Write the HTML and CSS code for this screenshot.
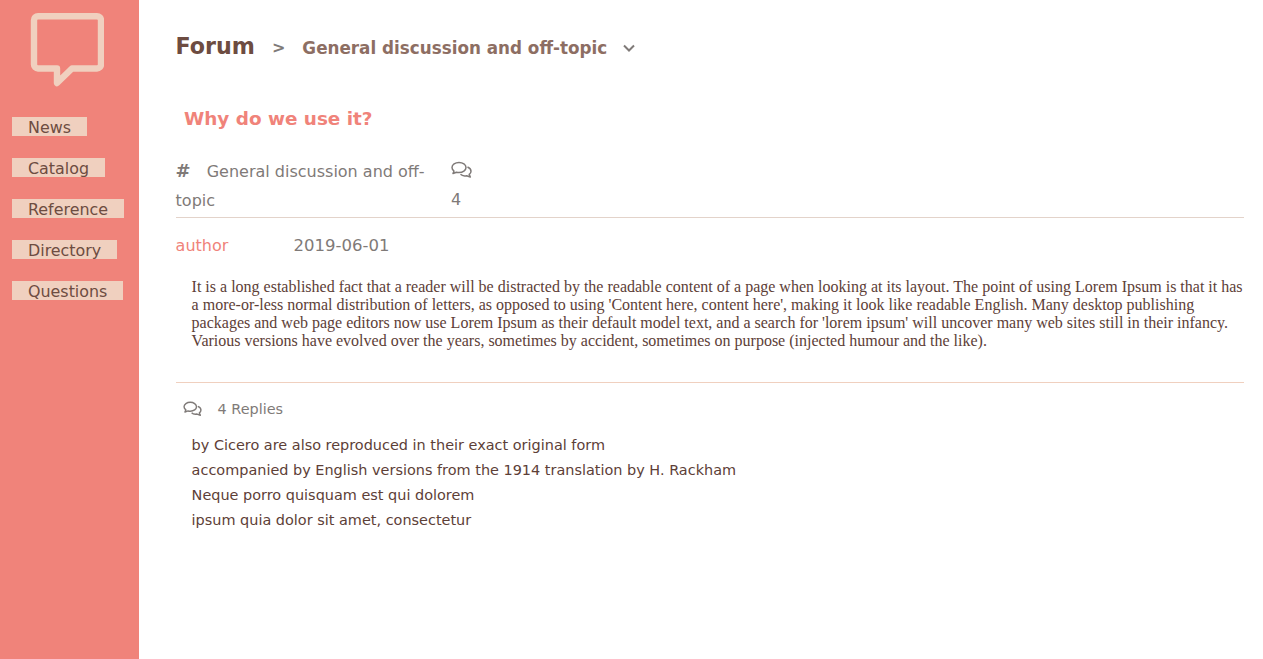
FILE: index.html
```html
<!DOCTYPE html>
<html>
	<head>
		<meta charset="UTF-8">
		<title>Forum</title>
		<link rel="stylesheet" href="styles.css">
	</head>
	<body>
		<!-- sidebar -->
		<div class="side">
			<svg class="logo" width="74" height="74" viewBox="0 0 74 74">
				<path d="M8 3.200H67A4 4 0 0 1 71 7.200V51.500A4 4 0 0 1 67 55.500H42L27 70V55.500H8A4 4 0 0 1 4 51.500V7.200A4 4 0 0 1 8 3.200Z" fill="none" stroke="#f0d0bf" stroke-width="6.400" stroke-linejoin="round"/>
			</svg>
			<ul class="nav">
				<li><a>News</a></li>
				<li><a>Catalog</a></li>
				<li><a>Reference</a></li>
				<li><a>Directory</a></li>
				<li><a>Questions</a></li>
			</ul>
		</div>
		<!-- main -->
		<div class="main">
			<div class="crumb">
				<span class="crumb-root">Forum</span>
				<span class="crumb-sep">&gt;</span>
				<span class="crumb-cat">General discussion and off-topic</span>
				<svg class="crumb-arrow" width="12" height="8" viewBox="0 0 12 8">
					<path d="M1 1.500L6 6.500L11 1.500" fill="none" stroke="#7f7a78" stroke-width="2"/>
				</svg>
			</div>
			<h2 class="title">Why do we use it?</h2>
			<div class="info">
				<div class="info-cat"><b class="hash">#</b>General discussion and off-topic</div>
				<div class="info-count">
					<svg class="talk" width="21" height="18" viewBox="0 0 21 18">
						<path d="M8 1.500C4.200 1.500 1 3.700 1 6.500C1 7.900 1.800 9.100 3 10L2 12.500L5.500 11.200C6.300 11.400 7.100 11.500 8 11.500C11.800 11.500 15 9.300 15 6.500C15 3.700 11.800 1.500 8 1.500Z" fill="none" stroke="#7f7a78" stroke-width="1.500" stroke-linejoin="round"/>
						<path d="M16.500 6C18.800 7 20 8.400 20 10.200C20 11.500 19.300 12.600 18.200 13.400L19.300 16L15.600 14.700C13.500 15.100 11 14.800 9.500 13.300" fill="none" stroke="#7f7a78" stroke-width="1.500" stroke-linejoin="round"/>
					</svg>
					<div>4</div>
				</div>
			</div>
			<div class="meta"><span class="author">author</span><span class="date">2019-06-01</span></div>
			<p class="content">It is a long established fact that a reader will be distracted by the readable content of a page when looking at its layout. The point of using Lorem Ipsum is that it has a more-or-less normal distribution of letters, as opposed to using 'Content here, content here', making it look like readable English. Many desktop publishing packages and web page editors now use Lorem Ipsum as their default model text, and a search for 'lorem ipsum' will uncover many web sites still in their infancy. Various versions have evolved over the years, sometimes by accident, sometimes on purpose (injected humour and the like).</p>
			<div class="replies-head">
				<svg class="talk-small" width="19" height="16" viewBox="0 0 21 18">
					<path d="M8 1.500C4.200 1.500 1 3.700 1 6.500C1 7.900 1.800 9.100 3 10L2 12.500L5.500 11.200C6.300 11.400 7.100 11.500 8 11.500C11.800 11.500 15 9.300 15 6.500C15 3.700 11.800 1.500 8 1.500Z" fill="none" stroke="#7f7a78" stroke-width="1.600" stroke-linejoin="round"/>
					<path d="M16.500 6C18.800 7 20 8.400 20 10.200C20 11.500 19.300 12.600 18.200 13.400L19.300 16L15.600 14.700C13.500 15.100 11 14.800 9.500 13.300" fill="none" stroke="#7f7a78" stroke-width="1.600" stroke-linejoin="round"/>
				</svg>
				<span>4 Replies</span>
			</div>
			<ul class="replies">
				<li>by Cicero are also reproduced in their exact original form</li>
				<li>accompanied by English versions from the 1914 translation by H. Rackham</li>
				<li>Neque porro quisquam est qui dolorem</li>
				<li>ipsum quia dolor sit amet, consectetur</li>
			</ul>
		</div>
	</body>
</html>
```

FILE: styles.css
```css
* {
	margin: 0;
	padding: 0;
	box-sizing: border-box;
}
html, body {
	height: 100%;
}
body {
	display: flex;
	font-family: "DejaVu Sans", sans-serif;
	background: #fff;
	overflow: hidden;
}
.side {
	width: 139px;
	flex-shrink: 0;
	background: #f0837a;
	padding: 13px 0 0 12px;
}
.logo {
	display: block;
	margin-left: 18px;
}
.nav {
	list-style: none;
	margin-top: 30px;
}
.nav li {
	height: 41px;
}
.nav a {
	display: inline-block;
	height: 19px;
	padding: 0 16px;
	background: #f0d0bf;
	color: #6d4c41;
	font-size: 15.9px;
	line-height: 21px;
	vertical-align: top;
}
.main {
	flex: 1;
	padding: 31px 19px 0 36.600px;
}
.crumb {
	display: flex;
	align-items: center;
	height: 29px;
}
.crumb-root {
	font-size: 22.200px;
	font-weight: bold;
	color: #6d4c41;
}
.crumb-sep {
	margin: 4px 0 0 17px;
	font-size: 16px;
	font-weight: bold;
	color: #7f7a78;
}
.crumb-cat {
	margin: 4px 0 0 17px;
	font-size: 16.800px;
	font-weight: bold;
	color: #8d6e63;
}
.crumb-arrow {
	margin: 5px 0 0 16px;
}
.title {
	margin: 46px 0 0 8.400px;
	font-size: 18.400px;
	line-height: 26px;
	color: #f0837a;
}
.info {
	display: flex;
	margin-top: 23px;
	height: 63px;
	padding-top: 1px;
	border-bottom: 1px solid #e3d3ca;
	font-size: 16px;
	line-height: 29px;
	color: #7f7a78;
}
.info-cat {
	width: 275.400px;
}
.hash {
	margin-right: 16px;
	font-size: 18px;
}
.talk {
	display: block;
	margin-top: 5px;
	margin-bottom: 6px;
}
.meta {
	margin-top: 18px;
	font-size: 16px;
	line-height: 20px;
	color: #7f7a78;
}
.author {
	display: inline-block;
	width: 118px;
	color: #f0837a;
}
.date {
	font-size: 16.500px;
}
.content {
	margin: 22px 0 0 16px;
	font-family: "Liberation Serif", serif;
	font-size: 16px;
	line-height: 18px;
	color: #5d4037;
}
.replies-head {
	display: flex;
	align-items: center;
	margin-top: 32px;
	padding: 16px 0 0 7px;
	height: 36px;
	border-top: 1px solid #f0d0bf;
	font-size: 14.400px;
	color: #7f7a78;
}
.talk-small {
	margin-right: 16px;
}
.replies {
	list-style: none;
	margin: 15px 0 0 16px;
	font-size: 14.450px;
	line-height: 25px;
	color: #5d4037;
}
```
